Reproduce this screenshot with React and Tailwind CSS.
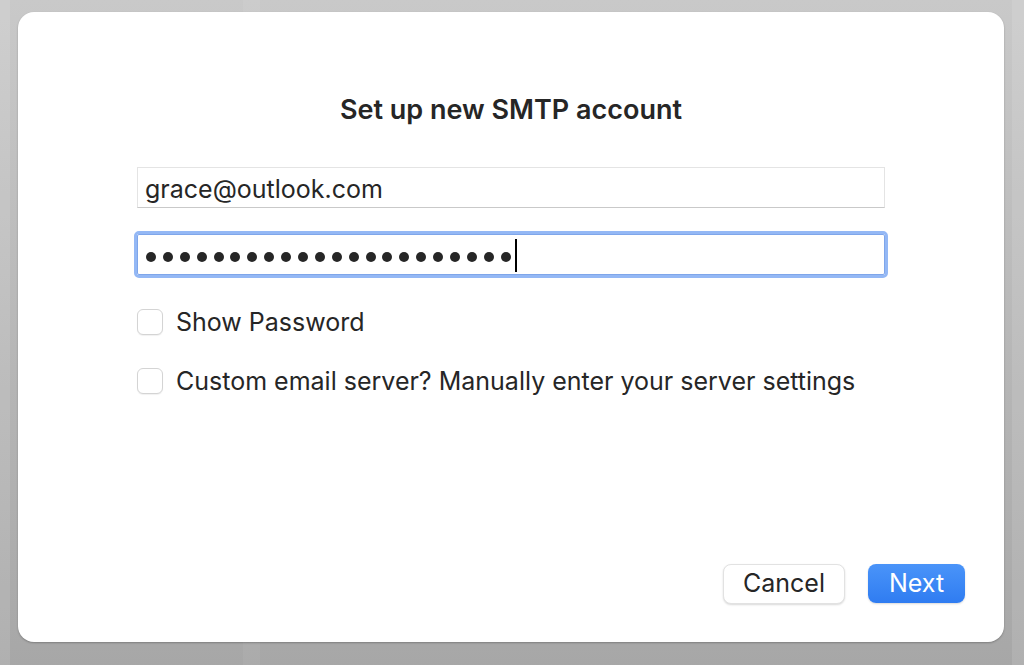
import React from "react";

const font = { fontFamily: "Inter, 'Liberation Sans', sans-serif" };

const Checkbox = ({ label }) => (
  <label className="flex items-center gap-[13px] h-[30px]">
    <span className="w-[26px] h-[26px] rounded-[6px] border border-[#d4d4d4] bg-white shadow-[0_1px_1px_rgba(0,0,0,0.06)]" />
    <span className="text-[25px] leading-[30px] text-[#262626]">{label}</span>
  </label>
);

export default function App() {
  const dots = Array.from({ length: 22 });

  return (
    <div className="relative w-[1024px] h-[665px] overflow-hidden" style={font}>
      {/* desktop behind the sheet */}
      <div className="flex h-full bg-gradient-to-b from-[#c9c9c9] to-[#a7a7a7]">
        <div className="w-[10px] bg-white/10" />
        <div className="w-[233px]" />
        <div className="w-[17px] bg-white/5" />
        <div className="flex-1" />
        <div className="w-[12px] bg-white/10" />
      </div>

      {/* dialog */}
      <div className="absolute left-[18px] top-[12px] w-[986px] h-[630px] bg-white rounded-[16px] shadow-[0_1px_2px_rgba(0,0,0,0.25)] flex flex-col">
        <h1 className="mt-[81px] text-center text-[27px] font-semibold text-[#262626] leading-[34px]">
          Set up new SMTP account
        </h1>

        <div className="ml-[119px] w-[748px] mt-[40px] flex flex-col">
          <div className="h-[41px] border border-[#e4e4e4] border-b-[#c9c9c9] flex items-center pl-[7px] pt-[4px] text-[25px] text-[#262626]">
            grace@outlook.com
          </div>

          <div className="mt-[26px] h-[41px] border border-[#7fa6ea] outline-[3px] outline-solid outline-[#94b8f5] rounded-[2px] flex items-center pl-[8px]">
            <div className="flex gap-[6.9px] mt-[5px]">
              {dots.map((_, i) => (
                <span key={i} className="w-[10px] h-[10px] rounded-full bg-[#262626]" />
              ))}
            </div>
            <span className="ml-[4px] mt-[2px] w-[2px] h-[33px] bg-black" />
          </div>

          <div className="mt-[32px] flex flex-col gap-[29px]">
            <Checkbox label="Show Password" />
            <Checkbox label="Custom email server? Manually enter your server settings" />
          </div>
        </div>

        <div className="mt-auto mb-[38px] mr-[39px] flex justify-end gap-[23px]">
          <button className="w-[122px] h-[40px] rounded-[8px] bg-white border border-[#e2e2e2] shadow-[0_1px_2px_rgba(0,0,0,0.15)] text-[25px] text-[#262626]">
            Cancel
          </button>
          <button className="w-[97px] h-[39px] rounded-[8px] bg-gradient-to-b from-[#4a94f9] to-[#2f7cf1] shadow-[0_1px_2px_rgba(0,0,0,0.15)] text-[25px] text-white">
            Next
          </button>
        </div>
      </div>
    </div>
  );
}
